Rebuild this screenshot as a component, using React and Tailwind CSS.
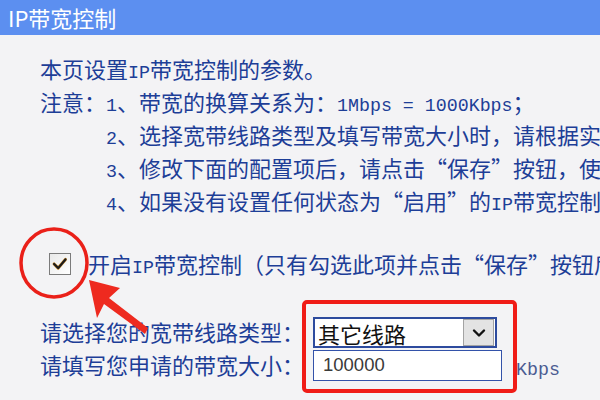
import React from 'react';

// Half-width Latin runs inside the Chinese text (SimSun-style mono)
function L({ children }) {
  return <span className="font-['Liberation_Mono',monospace] text-[18.3px] leading-none">{children}</span>;
}

// Full-width curly quotes
function Q({ children }) {
  return <span className="leading-none [font-feature-settings:'fwid']">{children}</span>;
}

const NOTES = [
  <>
    <L>1</L>、带宽的换算关系为：<L>1Mbps = 1000Kbps</L>；
  </>,
  <>
    <L>2</L>、选择宽带线路类型及填写带宽大小时，请根据实际情况进行选择和填写；
  </>,
  <>
    <L>3</L>、修改下面的配置项后，请点击<Q>“</Q>保存<Q>”</Q>按钮，使配置生效；
  </>,
  <>
    <L>4</L>、如果没有设置任何状态为<Q>“</Q>启用<Q>”</Q>的<L>IP</L>带宽控制规则，则该功能不生效。
  </>,
];

function Checkbox() {
  return (
    <div className="flex h-[22px] w-[22px] items-center justify-center border border-[#7b7b7b] bg-gradient-to-br from-[#e9e9e9] to-white">
      <svg viewBox="0 0 22 22" className="h-[20px] w-[20px]">
        <path d="M4.5 11 L9 15.5 L17 6" fill="none" stroke="#c98a2a" strokeWidth="3.4" strokeLinecap="round" strokeLinejoin="round" />
        <path d="M4.5 11 L9 15.5 L17 6" fill="none" stroke="#1b1b1b" strokeWidth="2.4" strokeLinecap="round" strokeLinejoin="round" />
      </svg>
    </div>
  );
}

export default function App() {
  return (
    <div className="relative h-[400px] w-[600px] overflow-hidden bg-[#f3f3f5] font-['Noto_Sans_CJK_SC',sans-serif]">
      {/* Title bar */}
      <div className="h-[35px] bg-[#5c8ff0] pl-[8px] text-[22px] leading-[34px] text-white">
        IP带宽控制
      </div>

      <div className="whitespace-nowrap pl-[40px] pt-[17px] text-[22px] leading-[33px] text-[#1d3e97]">
        <div className="h-[33px]">
          本页设置<L>IP</L>带宽控制的参数。
        </div>
        <div className="flex">
          <span>注意：</span>
          <div>
            {NOTES.map((note, i) => (
              <div key={i} className="h-[33px]">
                {note}
              </div>
            ))}
          </div>
        </div>

        {/* Enable switch */}
        <div className="mt-[30px] flex h-[33px] items-center">
          <div className="ml-[9px] mr-[17px]">
            <Checkbox />
          </div>
          <span>
            开启<L>IP</L>带宽控制（只有勾选此项并点击<Q>“</Q>保存<Q>”</Q>按钮后，以下设置才能生效）
          </span>
        </div>

        {/* Form */}
        <div className="mt-[36px] flex flex-col">
          <div className="flex h-[33px] items-center">
            <span className="-mt-[3px] w-[273px]">请选择您的宽带线路类型：</span>
            <div className="flex h-[31px] w-[184px] items-center border-2 border-[#2d4b9e] bg-white">
              <span className="flex-1 pl-[3px] text-[22px] leading-none text-[#111]">其它线路</span>
              <div className="mr-[1px] flex h-[27px] w-[31px] items-center justify-center border border-[#a3a3a3] bg-[#e3e3e3]">
                <svg viewBox="0 0 16 16" className="h-[16px] w-[16px]">
                  <path d="M3 5.5 L8 10.5 L13 5.5" fill="none" stroke="#111" strokeWidth="2.4" strokeLinecap="round" strokeLinejoin="round" />
                </svg>
              </div>
            </div>
          </div>
          <div className="flex h-[33px] items-center">
            <span className="-mt-[3px] w-[273px]">请填写您申请的带宽大小：</span>
            <div className="flex h-[31px] w-[189px] items-center border-[1.5px] border-[#3352a9] bg-white pl-[9px] font-['Liberation_Sans',sans-serif] text-[18.5px] leading-none text-[#3a3a3a]">
              100000
            </div>
            <span className="ml-[14px] text-[#4b5b92]">
              <L>Kbps</L>
            </span>
          </div>
        </div>
      </div>

      {/* Annotation: red box around the inputs */}
      <div className="absolute left-[302px] top-[300px] h-[93px] w-[215px] rounded-[5px] border-4 border-[#f01c17]" />

      {/* Annotation: circle + arrow at the checkbox */}
      <svg viewBox="0 0 600 400" className="pointer-events-none absolute inset-0 h-[400px] w-[600px]">
        <ellipse cx="54" cy="263" rx="33" ry="34" fill="none" stroke="#ea2019" strokeWidth="3.5" />
        <polygon points="89,280 120,288 109,298 148,328 145,334 104,304 97,318" fill="#ee2a1f" />
      </svg>
    </div>
  );
}
